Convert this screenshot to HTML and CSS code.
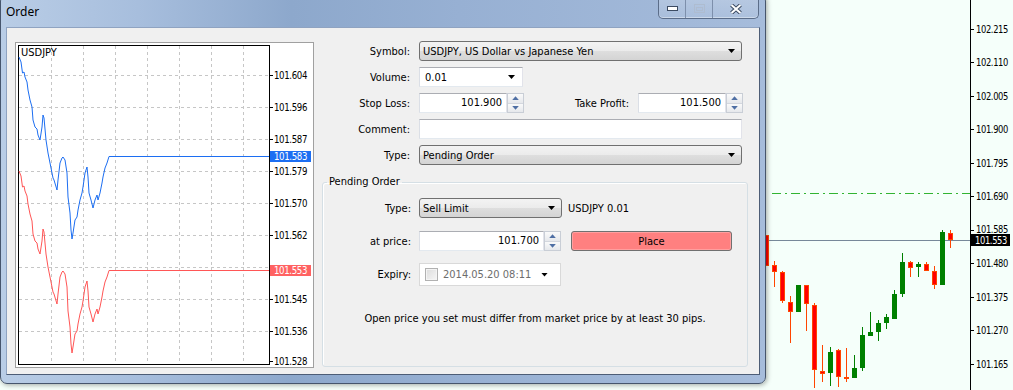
FILE: index.html
```html
<!doctype html>
<html lang="en">
<head>
  <meta charset="utf-8" />
  <title>Order</title>
  <link rel="stylesheet" href="styles.css">
</head>
<body>
<div class="desktop">
  <!-- terminal chart behind the dialog -->
  <svg class="chart" width="1013" height="390" viewBox="0 0 1013 390">
    <path class="level" d="M772 193.5H970"/>
    <path class="bid" d="M0 240.5H970"/>
    <g class="wick-r">
      <path d="M766.5 235V266 M774.5 261V287 M782.5 271V303 M790.5 296V343 M806.5 285V331 M814.5 303V388 M822.5 345V382 M838.5 349V387 M846.5 348V382 M910.5 261V277 M926.5 262V271 M934.5 266V289 M950.5 230V248"/>
    </g>
    <g class="wick-g">
      <path d="M798.5 285V312 M830.5 347V386 M854.5 355V378 M862.5 327V371 M870.5 312V336 M878.5 320V341 M886.5 314V329 M894.5 290V319 M902.5 253V297 M918.5 262V277 M942.5 230V285"/>
    </g>
    <g class="body-r">
      <rect x="764.5" y="235.5" width="4" height="30"/>
      <rect x="772.5" y="265.5" width="4" height="6"/>
      <rect x="780.5" y="272.5" width="4" height="28"/>
      <rect x="788.5" y="302.5" width="4" height="9"/>
      <rect x="804.5" y="285.5" width="4" height="18"/>
      <rect x="812.5" y="305.5" width="4" height="64"/>
      <rect x="820.5" y="371.5" width="4" height="2"/>
      <rect x="836.5" y="350.5" width="4" height="26"/>
      <rect x="844.5" y="377.5" width="4" height="1"/>
      <rect x="908.5" y="262.5" width="4" height="5"/>
      <rect x="924.5" y="264.5" width="4" height="6"/>
      <rect x="932.5" y="271.5" width="4" height="13"/>
      <rect x="948.5" y="233.5" width="4" height="6"/>
    </g>
    <g class="body-g">
      <rect x="796.5" y="285.5" width="4" height="26"/>
      <rect x="828.5" y="352.5" width="4" height="20"/>
      <rect x="852.5" y="368.5" width="4" height="9"/>
      <rect x="860.5" y="335.5" width="4" height="32"/>
      <rect x="868.5" y="332.5" width="4" height="3"/>
      <rect x="876.5" y="323.5" width="4" height="8"/>
      <rect x="884.5" y="317.5" width="4" height="5"/>
      <rect x="892.5" y="294.5" width="4" height="24"/>
      <rect x="900.5" y="262.5" width="4" height="31"/>
      <rect x="916.5" y="264.5" width="4" height="2"/>
      <rect x="940.5" y="232.5" width="4" height="52"/>
    </g>
    <path class="axis" d="M970.5 0V390"/>
    <path class="axis" d="M970 29.5h4 M970 62.5h4 M970 96.5h4 M970 129.5h4 M970 163.5h4 M970 196.5h4 M970 230.5h4 M970 263.5h4 M970 297.5h4 M970 330.5h4 M970 364.5h4"/>
    <g class="scale">
      <text x="976" y="33" textLength="32" lengthAdjust="spacingAndGlyphs">102.215</text>
      <text x="976" y="66" textLength="32" lengthAdjust="spacingAndGlyphs">102.110</text>
      <text x="976" y="100" textLength="32" lengthAdjust="spacingAndGlyphs">102.005</text>
      <text x="976" y="133" textLength="32" lengthAdjust="spacingAndGlyphs">101.900</text>
      <text x="976" y="167" textLength="32" lengthAdjust="spacingAndGlyphs">101.795</text>
      <text x="976" y="200" textLength="32" lengthAdjust="spacingAndGlyphs">101.690</text>
      <text x="976" y="233" textLength="32" lengthAdjust="spacingAndGlyphs">101.585</text>
      <text x="976" y="267" textLength="32" lengthAdjust="spacingAndGlyphs">101.480</text>
      <text x="976" y="301" textLength="32" lengthAdjust="spacingAndGlyphs">101.375</text>
      <text x="976" y="334" textLength="32" lengthAdjust="spacingAndGlyphs">101.270</text>
      <text x="976" y="368" textLength="32" lengthAdjust="spacingAndGlyphs">101.165</text>
    </g>
    <rect class="bid-box" x="971" y="234" width="39" height="12"/>
    <text class="bid-txt" x="975" y="244" textLength="32" lengthAdjust="spacingAndGlyphs">101.553</text>
  </svg>

  <div class="window">
    <div class="titlebar">
      <span class="title">Order</span>
      <div class="caption">
        <span class="cbtn">
          <svg width="11" height="5" viewBox="0 0 11 5"><rect x="0.5" y="0.5" width="10" height="4" fill="#fff" stroke="#3c4b62"/></svg>
        </span>
        <span class="cbtn">
          <svg width="11" height="9" viewBox="0 0 11 9"><rect x="0.5" y="0.5" width="10" height="8" fill="none" stroke="#aebcd0"/><rect x="2.5" y="3.5" width="6" height="3" fill="none" stroke="#aebcd0"/></svg>
        </span>
        <span class="cbtn close">
          <svg width="12" height="10" viewBox="0 0 12 10"><path d="M1.5 1L10.5 9M10.5 1L1.5 9" stroke="#3c4b62" stroke-width="4"/><path d="M1.5 1L10.5 9M10.5 1L1.5 9" stroke="#fff" stroke-width="2"/></svg>
        </span>
      </div>
    </div>

    <div class="client">
      <div class="mini">
        <svg width="297" height="324" viewBox="16 43 297 324">
          <path class="grid" d="M51.5 46V364 M83.5 46V364 M115.5 46V364 M147.5 46V364 M179.5 46V364 M211.5 46V364 M243.5 46V364 M19 75.5H269 M19 107.5H269 M19 139.5H269 M19 171.5H269 M19 203.5H269 M19 235.5H269 M19 267.5H269 M19 299.5H269 M19 331.5H269"/>
          <rect class="frame" x="18.5" y="45.5" width="251" height="319"/>
          <path class="frame" d="M270 75.5h3 M270 107.5h3 M270 139.5h3 M270 171.5h3 M270 203.5h3 M270 235.5h3 M270 267.5h3 M270 299.5h3 M270 331.5h3 M270 361.5h3"/>
          <g class="scale">
            <text x="274" y="79" textLength="33" lengthAdjust="spacingAndGlyphs">101.604</text>
            <text x="274" y="111" textLength="33" lengthAdjust="spacingAndGlyphs">101.596</text>
            <text x="274" y="143" textLength="33" lengthAdjust="spacingAndGlyphs">101.587</text>
            <text x="274" y="175" textLength="33" lengthAdjust="spacingAndGlyphs">101.579</text>
            <text x="274" y="207" textLength="33" lengthAdjust="spacingAndGlyphs">101.570</text>
            <text x="274" y="239" textLength="33" lengthAdjust="spacingAndGlyphs">101.562</text>
            <text x="274" y="303" textLength="33" lengthAdjust="spacingAndGlyphs">101.545</text>
            <text x="274" y="335" textLength="33" lengthAdjust="spacingAndGlyphs">101.536</text>
            <text x="274" y="365" textLength="33" lengthAdjust="spacingAndGlyphs">101.528</text>
          </g>
          <polyline class="ask" points="19,57 21,62 22.5,73 24,72 25,77 27,82 28,90 30,100 32,107 33,120 35,127 37,129 38,135 40,140 42,127 43,115 44,118 46,140 48,153 51,168 53,178 54,180 57,190 58,180 60,163 62,158 63,157 65,160 67,173 68,197 70,213 71,230 72,239 73,233 75,220 77,217 78,210 80,200 82,193 83,187 85,173 87,167 88,177 89,193 91,200 93,208 95,200 97,195 98,200 100,193 102,183 103,177 105,168 107,163 109,156.5 269,156.5"/>
          <polyline class="bidl" transform="translate(0 114)" points="19,57 21,62 22.5,73 24,72 25,77 27,82 28,90 30,100 32,107 33,120 35,127 37,129 38,135 40,140 42,127 43,115 44,118 46,140 48,153 51,168 53,178 54,180 57,190 58,180 60,163 62,158 63,157 65,160 67,173 68,197 70,213 71,230 72,239 73,233 75,220 77,217 78,210 80,200 82,193 83,187 85,173 87,167 88,177 89,193 91,200 93,208 95,200 97,195 98,200 100,193 102,183 103,177 105,168 107,163 109,156.5 269,156.5"/>
          <rect class="ask-box" x="270" y="151" width="41" height="11"/>
          <text class="box-txt" x="274" y="160" textLength="33" lengthAdjust="spacingAndGlyphs">101.583</text>
          <rect class="bid-box2" x="270" y="265" width="41" height="11"/>
          <text class="box-txt" x="274" y="274" textLength="33" lengthAdjust="spacingAndGlyphs">101.553</text>
          <text class="sym" x="21" y="56">USDJPY</text>
        </svg>
      </div>

      <div class="form">
        <div class="row">
          <label class="lbl">Symbol:</label>
          <div class="combo w-full"><span>USDJPY, US Dollar vs Japanese Yen</span></div>
        </div>
        <div class="row">
          <label class="lbl">Volume:</label>
          <div class="combo edit w-vol"><span>0.01</span></div>
        </div>
        <div class="row">
          <label class="lbl">Stop Loss:</label>
          <div class="spin w-sl"><span class="val">101.900</span><span class="spinbtn"><i class="up"></i><i class="dn"></i></span></div>
          <label class="lbl tp">Take Profit:</label>
          <div class="spin w-sl"><span class="val">101.500</span><span class="spinbtn"><i class="up"></i><i class="dn"></i></span></div>
        </div>
        <div class="row">
          <label class="lbl">Comment:</label>
          <div class="text w-full"></div>
        </div>
        <div class="row">
          <label class="lbl">Type:</label>
          <div class="combo w-full"><span>Pending Order</span></div>
        </div>

        <fieldset class="group">
          <legend>Pending Order</legend>
          <div class="row g1">
            <label class="lbl g">Type:</label>
            <div class="combo w-type"><span>Sell Limit</span></div>
            <span class="info">USDJPY 0.01</span>
          </div>
          <div class="row g2">
            <label class="lbl g">at price:</label>
            <div class="spin w-price"><span class="val">101.700</span><span class="spinbtn"><i class="up"></i><i class="dn"></i></span></div>
            <button class="place">Place</button>
          </div>
          <div class="row g3">
            <label class="lbl g">Expiry:</label>
            <div class="expiry"><span class="check"></span><span class="date">2014.05.20 08:11</span></div>
          </div>
          <p class="note">Open price you set must differ from market price by at least 30 pips.</p>
        </fieldset>
      </div>
    </div>
  </div>
</div>
</body>
</html>
```

FILE: styles.css
```css
html, body { margin:0; padding:0; height:100%; overflow:hidden; background:#f5fffa;
  font-family:"DejaVu Sans Condensed","DejaVu Sans",sans-serif; font-size:11px; color:#000; }
.desktop{ position:relative; width:1013px; height:390px; }

/* background chart */
.chart{ display:block; }
.chart path, .chart polyline{ fill:none; }
.chart .level{ stroke:#32b432; stroke-dasharray:9 4 2 4; }
.chart .bid{ stroke:#778899; }
.chart .axis{ stroke:#000; }
.wick-r path{ stroke:#ff4500; }
.wick-g path{ stroke:#008000; }
.body-r rect{ fill:#f00; stroke:#ff4500; }
.body-g rect{ fill:#008000; stroke:#008000; }
.scale text, .bid-txt, .box-txt{ font-family:"DejaVu Sans Condensed","DejaVu Sans",sans-serif; font-size:10.5px; letter-spacing:-0.4px; }
.scale text{ fill:#000; }
.bid-box{ fill:#000; }
.bid-txt{ fill:#fff; }

/* dialog window */
.window{
  position:absolute; left:0; top:-6px; width:766px; height:390px; box-sizing:border-box;
  border:1px solid #46556c; border-radius:7px; padding:0 5px 8px 5px;
  background:linear-gradient(90deg,#b9cde6 0%,#a7bedd 18%,#8da8cc 38%,#97b0d3 60%,#a6bcdb 100%);
  box-shadow:1px 1px 5px rgba(0,0,0,.35);
  display:flex; flex-direction:column;
}
.titlebar{ height:32px; display:flex; align-items:flex-start; flex:none; }
.title{ font-family:"Noto Sans","Open Sans",sans-serif; font-size:12px; line-height:16px; padding-top:9px; }
.caption{
  margin-left:auto; margin-right:1px; height:23px; display:flex;
  border:1px solid #5b6d89; border-top:0; border-radius:0 0 5px 5px;
  background:linear-gradient(rgba(255,255,255,.22), rgba(255,255,255,.08));
  box-shadow:inset 0 -1px 0 rgba(255,255,255,.4);
}
.cbtn{ width:27px; display:flex; align-items:center; justify-content:center; padding-top:4px; box-sizing:border-box;
  border-right:1px solid #7d8fab; }
.cbtn.close{ width:45px; border-right:0; }
.client{
  flex:1; display:flex; align-items:flex-start; background:#f0f0f0;
  border:1px solid; border-color:#8fa3c1 #4d5d76 #4d5d76 #8fa3c1;
  padding:14px 0 0 8px;
}

/* small tick chart */
.mini{ width:297px; height:324px; border:1px solid #a0a0a0; background:#fff; flex:none; }
.mini svg{ display:block; }
.mini .grid{ stroke:#c6c6c6; stroke-dasharray:3 3; fill:none; }
.mini .frame{ stroke:#000; fill:none; }
.mini .ask{ stroke:#1c6ef2; fill:none; }
.mini .bidl{ stroke:#ff5656; fill:none; }
.mini .ask-box{ fill:#1c6ef2; }
.mini .bid-box2{ fill:#ff6262; }
.mini .box-txt{ fill:#fff; }
.mini .sym{ fill:#000; font-size:11px; }

/* form */
.form{ margin:-1px 0 0 6px; width:430px; }
.form > .row{ width:423px; }
.row{ display:flex; align-items:center; height:20px; margin-bottom:6px; }
.lbl{ width:90px; margin-right:9px; text-align:right; flex:none; }
.lbl.tp{ width:auto; margin-left:auto; }
.lbl.g{ width:84px; margin-right:8px; }

.combo{
  height:20px; box-sizing:border-box; display:flex; align-items:center; justify-content:space-between;
  border:1px solid #707070; border-radius:3px; padding:0 6px 0 3px;
  background:linear-gradient(#f3f3f3 0%,#ebebeb 50%,#dedede 51%,#d4d4d4 100%);
}
.combo::after{ content:""; width:7px; height:4px; background:#000; clip-path:polygon(0 0,100% 0,50% 100%); }
.combo.edit{ background:#fff; border-radius:0; border-color:#abadb3 #e2e3ea #e3e9ef #dbdfe6; padding:0 7px 0 5px; }
.w-full{ width:323px; }
.w-vol{ width:104px; }
.w-type{ width:143px; }

.text{ height:20px; box-sizing:border-box; background:#fff; border:1px solid; border-color:#abadb3 #e2e3ea #e3e9ef #dbdfe6; }

.spin{ height:20px; display:flex; box-sizing:border-box; }
.spin .val{ flex:1; background:#fff; border:1px solid; border-color:#abadb3 #e2e3ea #e3e9ef #dbdfe6;
  text-align:right; padding-right:4px; line-height:18px; }
.spinbtn{ width:17px; display:flex; flex-direction:column; border:1px solid #c9ced6; box-sizing:border-box; background:#f4f4f4; }
.spinbtn i{ flex:1; display:flex; align-items:center; justify-content:center;
  background:linear-gradient(#fafafa,#e6e8ec); border-bottom:1px solid #d3d7de; }
.spinbtn i:last-child{ border-bottom:0; }
.spinbtn i::after{ content:""; width:7px; height:4px; background:#4f6fa4; }
.spinbtn .up::after{ clip-path:polygon(50% 0,100% 100%,0 100%); }
.spinbtn .dn::after{ clip-path:polygon(0 0,100% 0,50% 100%); }
.w-sl{ width:105px; }
.w-price{ width:142px; }

/* pending order group */
.group{
  margin:10px 0 0 2px; width:426px; box-sizing:border-box; min-inline-size:0;
  border:1px solid #d5dfe5; border-radius:3px; padding:9px 4px 40px 4px;
  box-shadow:inset 1px 1px 0 #fff;
}
.group legend{ padding:0 2px; line-height:14px; }
.group .row{ margin-bottom:0; }
.g2{ margin-top:13px; }
.g3{ margin-top:12px; height:23px; }
.info{ margin-left:6px; }
.place{
  margin-left:10px; width:161px; height:20px; padding:0;
  font:inherit; color:#000; background:#ff8080;
  border:1px solid #707070; border-radius:3px; box-shadow:inset 0 0 0 1px #ff9f9f;
}
.expiry{
  width:142px; height:23px; box-sizing:border-box; display:flex; align-items:center;
  background:#fff; border:1px solid #d9d9d9; padding:0 12px 0 5px;
}
.expiry::after{ content:""; margin-left:auto; width:7px; height:4px; background:#000; clip-path:polygon(0 0,100% 0,50% 100%); }
.check{ width:13px; height:13px; box-sizing:border-box; border:1px solid #b1b1b1;
  background:linear-gradient(135deg,#dcdcdc,#f6f6f6); box-shadow:inset 0 0 0 1px #f4f4f4; }
.date{ margin-left:5px; color:#6d6d6d; white-space:nowrap; }
.note{ margin:26px 0 0; line-height:14px; text-align:center; }
```
